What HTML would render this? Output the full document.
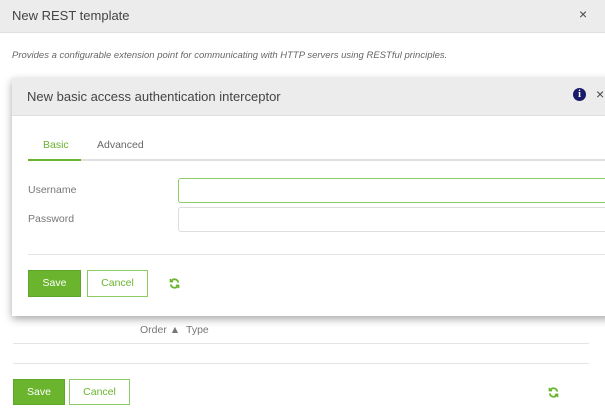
<!DOCTYPE html>
<html><head><style>
*{box-sizing:border-box;margin:0;padding:0}
body{width:605px;height:418px;overflow:hidden;background:#fff;font-family:"Liberation Sans",sans-serif;position:relative;color:#555}
.a{position:absolute}
.btn{position:absolute;font-size:10.5px;text-align:center;line-height:25px}
.save{background:#6ab42e;color:#fff;border:1px solid #5ea628}
.cancel{background:#fff;color:#6ab42e;border:1px solid #8ccc63}
</style></head><body>
<div class="a" style="left:0;top:0;width:605px;height:33px;background:#ececec;border-bottom:1px solid #e0e0e0"></div>
<div class="a" style="left:12px;top:8px;font-size:13px;color:#444">New REST template</div>
<div class="a" style="left:579px;top:6px;font-size:14px;color:#444">×</div>
<div class="a" style="left:12px;top:50px;font-size:9.5px;font-style:italic;color:#666">Provides a configurable extension point for communicating with HTTP servers using RESTful principles.</div>

<div class="a" style="left:140px;top:324px;font-size:10.5px;color:#777">Order ▲&nbsp;&nbsp;Type</div>
<div class="a" style="left:13px;top:343px;width:576px;height:1px;background:#e4e4e4"></div>
<div class="a" style="left:13px;top:363px;width:576px;height:1px;background:#e4e4e4"></div>
<div class="btn save" style="left:13px;top:379px;width:52px;height:26px">Save</div>
<div class="btn cancel" style="left:69px;top:379px;width:61px;height:26px">Cancel</div>
<svg class="a" style="left:548px;top:387px" width="11" height="11" viewBox="0 0 12 12" fill="none" stroke="#6ab42e" stroke-width="2"><path d="M10 5A4 4 0 0 0 2.5 3.5M2 7A4 4 0 0 0 9.5 8.5"/><path d="M1.5 1v3h3M10.5 11V8h-3" stroke-width="1.6"/></svg>

<div class="a" style="left:12px;top:78px;width:600px;height:238px;background:#fff;box-shadow:0 3px 8px rgba(0,0,0,.35)">
<div class="a" style="left:0;top:0;width:600px;height:38px;background:#ececec;border-bottom:1px solid #e0e0e0"></div>
<div class="a" style="left:15px;top:11px;font-size:13px;color:#444">New basic access authentication interceptor</div>
<div class="a" style="left:561px;top:10px;width:13px;height:13px;border-radius:50%;background:#1a1a6a;color:#fff;font-size:10px;font-weight:bold;text-align:center;line-height:13px;font-family:'Liberation Serif',serif">i</div>
<div class="a" style="left:584px;top:8px;font-size:14px;color:#444">×</div>
<div class="a" style="left:31px;top:61px;font-size:10.5px;color:#6ab42e">Basic</div>
<div class="a" style="left:85px;top:61px;font-size:10.5px;color:#666">Advanced</div>
<div class="a" style="left:16px;top:81px;width:584px;height:2px;background:#e0e0e0"></div>
<div class="a" style="left:16px;top:81px;width:53px;height:2px;background:#6ab42e"></div>
<div class="a" style="left:16px;top:106px;font-size:10.5px;color:#777">Username</div>
<div class="a" style="left:16px;top:135px;font-size:10.5px;color:#777">Password</div>
<div class="a" style="left:166px;top:100px;width:430px;height:25px;border:1px solid #8ccc63;border-radius:3px"></div>
<div class="a" style="left:166px;top:129px;width:430px;height:25px;border:1px solid #ddd;border-radius:3px"></div>
<div class="a" style="left:16px;top:176px;width:584px;height:1px;background:#e4e4e4"></div>
<div class="btn save" style="left:16px;top:192px;width:53px;height:27px">Save</div>
<div class="btn cancel" style="left:75px;top:192px;width:61px;height:27px">Cancel</div>
<svg class="a" style="left:157px;top:200px" width="11" height="11" viewBox="0 0 12 12" fill="none" stroke="#6ab42e" stroke-width="2"><path d="M10 5A4 4 0 0 0 2.5 3.5M2 7A4 4 0 0 0 9.5 8.5"/><path d="M1.5 1v3h3M10.5 11V8h-3" stroke-width="1.6"/></svg>
</div>
</body></html>
